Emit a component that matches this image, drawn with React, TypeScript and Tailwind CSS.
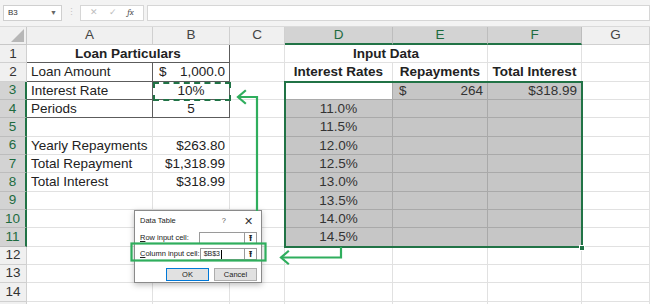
import React from "react";

type Cell = {
  text?: React.ReactNode;
  align?: "l" | "c" | "r";
  bold?: boolean;
  span?: number;
  cls?: string;
};

const GRID = "border-r border-b border-[#e1e1e1]";
const DARK = "border-r border-b border-[#5c5c5c]";
const SEL = "bg-[#c6c6c6] border-r border-b border-[#a9a9a9] text-[#333]";

// Формат "бухгалтерський": $ зліва, число справа
const Acc = ({ v }: { v: string }) => (
  <span className="flex w-full justify-between">
    <span>$</span>
    <span>{v}</span>
  </span>
);

const rates = ["11.0%", "11.5%", "12.0%", "12.5%", "13.0%", "13.5%", "14.0%", "14.5%"];

const buildRow = (r: number): Cell[] => {
  const inSel = r >= 3 && r <= 11;
  const cells: Cell[] = [];

  // A, B
  if (r === 1) {
    cells.push({ text: "Loan Particulars", bold: true, align: "c", span: 2, cls: DARK });
  } else if (r === 2) {
    cells.push({ text: "Loan Amount", cls: DARK });
    cells.push({ text: <Acc v="1,000.0" />, cls: DARK + " pl-[6px]" });
  } else if (r === 3) {
    cells.push({ text: "Interest Rate", cls: DARK });
    cells.push({ text: "10%", align: "c", cls: DARK });
  } else if (r === 4) {
    cells.push({ text: "Periods", cls: DARK });
    cells.push({ text: "5", align: "c", cls: DARK });
  } else if (r === 6) {
    cells.push({ text: "Yearly Repayments" });
    cells.push({ text: "$263.80", align: "r" });
  } else if (r === 7) {
    cells.push({ text: "Total Repayment" });
    cells.push({ text: "$1,318.99", align: "r" });
  } else if (r === 8) {
    cells.push({ text: "Total Interest" });
    cells.push({ text: "$318.99", align: "r" });
  } else {
    cells.push({});
    cells.push({});
  }

  // C
  cells.push({});

  // D, E, F
  if (r === 1) {
    cells.push({ text: "Input Data", bold: true, align: "c", span: 2 });
    cells.push({});
  } else if (r === 2) {
    cells.push({ text: "Interest Rates", bold: true, align: "c" });
    cells.push({ text: "Repayments", bold: true, align: "c" });
    cells.push({ text: "Total Interest", bold: true, align: "c" });
  } else if (r === 3) {
    cells.push({ cls: "bg-white border-r border-b border-[#a9a9a9]" });
    cells.push({ text: <Acc v="264" />, cls: SEL + " pl-[6px]" });
    cells.push({ text: "$318.99", align: "r", cls: SEL });
  } else if (inSel) {
    cells.push({ text: rates[r - 4], align: "c", cls: SEL });
    cells.push({ cls: SEL });
    cells.push({ cls: SEL });
  } else {
    cells.push({});
    cells.push({});
    cells.push({});
  }

  // G
  cells.push({});
  return cells;
};

const cols = ["A", "B", "C", "D", "E", "F", "G"];

export default function App() {
  return (
    <div
      className="relative w-[650px] h-[304px] overflow-hidden bg-white text-[#222]"
      style={{ fontFamily: '"Liberation Sans", Arial, sans-serif' }}
    >
      {/* Рядок формул */}
      <div className="h-[27px] bg-[#f3f3f3] flex items-center border-b border-[#dadada]">
        <div className="ml-[3px] w-[59px] h-[16px] bg-white border border-[#cfcfcf] flex items-center justify-between px-[4px] text-[8px] text-[#333]">
          <span>B3</span>
          <span className="text-[7px] text-[#666]">▼</span>
        </div>
        <div className="w-[18px] flex justify-center text-[9px] text-[#c4c4c4]">⋮</div>
        <div className="w-[64px] h-[16px] bg-white border border-[#d6d6d6] flex items-center justify-around px-[4px] text-[9px] text-[#bdbdbd]">
          <span>✕</span>
          <span>✓</span>
          <span className="italic text-[#555] font-serif">fx</span>
        </div>
        <div className="ml-[3px] flex-1 h-[16px] bg-white border border-[#d6d6d6]" />
      </div>

      {/* Сітка аркуша */}
      <div className="grid grid-cols-[27px_126px_77px_55px_108px_95px_94px_1fr] grid-rows-[18px_repeat(15,18.33px)] text-[13.5px]">
        {/* Кут */}
        <div className="relative bg-[#f0f0f0] border-r border-b border-[#c8c8c8]">
          <div className="absolute right-[2px] bottom-[2px] w-0 h-0 border-l-[13px] border-l-transparent border-b-[13px] border-b-[#b7b7b7]" />
        </div>
        {cols.map((c) => {
          const sel = c === "D" || c === "E" || c === "F";
          return (
            <div
              key={c}
              className={
                sel
                  ? "flex items-center justify-center bg-[#d3d3d3] text-[#1d6b3f] border-r border-[#bdbdbd] border-b-2 border-b-[#217346]"
                  : "flex items-center justify-center bg-[#f0f0f0] text-[#444] border-r border-b border-[#d0d0d0]"
              }
            >
              {c}
            </div>
          );
        })}

        {Array.from({ length: 15 }, (_, i) => i + 1).map((r) => {
          const inSel = r >= 3 && r <= 11;
          return (
            <React.Fragment key={r}>
              <div
                className={
                  inSel
                    ? "flex items-center justify-center bg-[#d3d3d3] text-[#1d6b3f] border-b border-[#bdbdbd] border-r-2 border-r-[#217346]"
                    : "flex items-center justify-center bg-[#f0f0f0] text-[#333] border-b border-r border-[#d0d0d0]"
                }
              >
                {r < 15 ? r : ""}
              </div>
              {buildRow(r).map((cell, j) => (
                <div
                  key={j}
                  className={[
                    "flex items-center overflow-hidden whitespace-nowrap px-[4px] leading-none",
                    cell.span === 2 ? "col-span-2" : "",
                    cell.align === "c" ? "justify-center" : cell.align === "r" ? "justify-end" : "justify-start",
                    cell.bold ? "font-bold" : "",
                    cell.cls ?? GRID,
                  ].join(" ")}
                >
                  {cell.text}
                </div>
              ))}
            </React.Fragment>
          );
        })}
      </div>

      {/* Виділення D3:F11 */}
      <div className="absolute left-[284px] top-[81px] w-[299px] h-[167px] border-2 border-[#217346] pointer-events-none" />
      <div className="absolute left-[579px] top-[245px] w-[6px] h-[6px] bg-[#217346] border border-white" />

      {/* Мурашки навколо B3 */}
      <div className="absolute left-[153px] top-[82px] w-[78px] h-[19px] border-2 border-dashed border-[#217346]" />

      {/* Діалог Data Table */}
      <div
        className="absolute left-[134px] top-[210px] w-[128px] h-[73px] bg-white border border-[#8a8a8a] shadow-[0_2px_6px_rgba(0,0,0,0.25)] text-[7.5px] text-[#222] whitespace-nowrap"
        style={{ fontFamily: '"Liberation Sans", Arial, sans-serif' }}
      >
        <div className="flex items-center h-[20px] pl-[5px] pr-[8px]">
          <span className="flex-1">Data Table</span>
          <span className="mr-[18px] text-[#555]">?</span>
          <span className="text-[11px] text-[#333]">✕</span>
        </div>
        <div className="flex items-center h-[14px] pl-[5px] pr-[4px]">
          <span className="w-[60px]">
            <span className="underline">R</span>ow input cell:
          </span>
          <div className="w-[46px] h-[12px] border border-[#9a9a9a] bg-white" />
          <div className="w-[12px] h-[12px] border border-[#9a9a9a] border-l-0 flex items-center justify-center text-[9px] font-bold leading-none">
            ⭱
          </div>
        </div>
        <div className="flex items-center h-[14px] pl-[5px] pr-[4px] mt-[2px]">
          <span className="w-[60px]">
            <span className="underline">C</span>olumn input cell:
          </span>
          <div className="w-[46px] h-[12px] border border-[#9a9a9a] bg-white flex items-center pl-[3px] text-[7px]">
            $B$3<span className="w-px h-[9px] bg-black ml-px" />
          </div>
          <div className="w-[12px] h-[12px] border border-[#9a9a9a] border-l-0 flex items-center justify-center text-[9px] font-bold leading-none">
            ⭱
          </div>
        </div>
        <div className="flex justify-end gap-[5px] pr-[4px] mt-[7px]">
          <div className="w-[43px] h-[13px] bg-[#e1e1e1] border border-[#0078d7] flex items-center justify-center">
            OK
          </div>
          <div className="w-[43px] h-[13px] bg-[#e1e1e1] border border-[#adadad] flex items-center justify-center">
            Cancel
          </div>
        </div>
      </div>

      {/* Стрілки та підсвітка */}
      <svg className="absolute inset-0 pointer-events-none" width="650" height="304">
        <g fill="none" stroke="#2fae5d" strokeWidth="2.2" strokeLinecap="square">
          <path d="M257 210 V97 H239" />
          <path d="M245 91 L238 97 L245 103" strokeLinejoin="miter" />
          <path d="M341 248 V257.5 H282" />
          <path d="M288 251.5 L281 257.5 L288 263.5" strokeLinejoin="miter" />
          <rect x="131.5" y="243.5" width="134" height="17" />
        </g>
      </svg>
    </div>
  );
}
